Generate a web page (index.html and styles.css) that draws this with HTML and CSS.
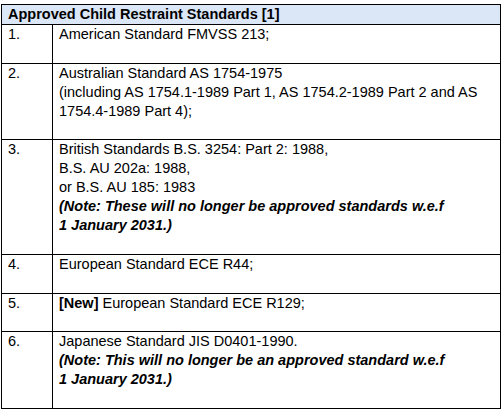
FILE: index.html
```html
<!DOCTYPE html>
<html>
<head>
<meta charset="utf-8">
<link rel="stylesheet" href="styles.css">
</head>
<body>
<table class="std">
  <colgroup>
    <col class="col-num">
    <col class="col-txt">
  </colgroup>
  <thead>
    <tr><th colspan="2" class="head">Approved Child Restraint Standards [1]</th></tr>
  </thead>
  <tbody>
    <tr>
      <td class="num">1.</td>
      <td class="txt"><p>American Standard FMVSS 213;</p><p>&nbsp;</p></td>
    </tr>
    <tr>
      <td class="num">2.</td>
      <td class="txt"><p>Australian Standard AS 1754-1975<br>(including AS 1754.1-1989 Part 1, AS 1754.2-1989 Part 2 and AS<br>1754.4-1989 Part 4);</p><p>&nbsp;</p></td>
    </tr>
    <tr>
      <td class="num">3.</td>
      <td class="txt"><p>British Standards B.S. 3254: Part 2: 1988,<br>B.S. AU 202a: 1988,<br>or B.S. AU 185: 1983<br><b><i>(Note: These will no longer be approved standards w.e.f<br>1 January 2031.)</i></b></p><p>&nbsp;</p></td>
    </tr>
    <tr>
      <td class="num">4.</td>
      <td class="txt"><p>European Standard ECE R44;</p><p>&nbsp;</p></td>
    </tr>
    <tr>
      <td class="num">5.</td>
      <td class="txt"><p><b>[New]</b> European Standard ECE R129;</p><p>&nbsp;</p></td>
    </tr>
    <tr>
      <td class="num">6.</td>
      <td class="txt"><p>Japanese Standard JIS D0401-1990.<br><b><i>(Note: This will no longer be an approved standard w.e.f<br>1 January 2031.)</i></b></p><p>&nbsp;</p></td>
    </tr>
  </tbody>
</table>
</body>
</html>
```

FILE: styles.css
```css
html, body {
  margin: 0;
  padding: 0;
  background: #fff;
}
body {
  padding: 4px 0 0 1px;
  font-family: "Liberation Sans", Arial, sans-serif;
  font-size: 14.5px;
  line-height: 18.9px;
  color: #000;
}
.std {
  border-collapse: collapse;
  width: 500px;
  table-layout: fixed;
}
.col-num {
  width: 51px;
}
.std th, .std td {
  border: 1px solid #000;
  vertical-align: top;
  padding: 0 6px;
  text-align: left;
}
.txt {
  white-space: nowrap;
}
.head {
  background: #dbe7f6;
  font-weight: bold;
  padding: 0 7px;
}
.txt p {
  margin: 0;
}
```
